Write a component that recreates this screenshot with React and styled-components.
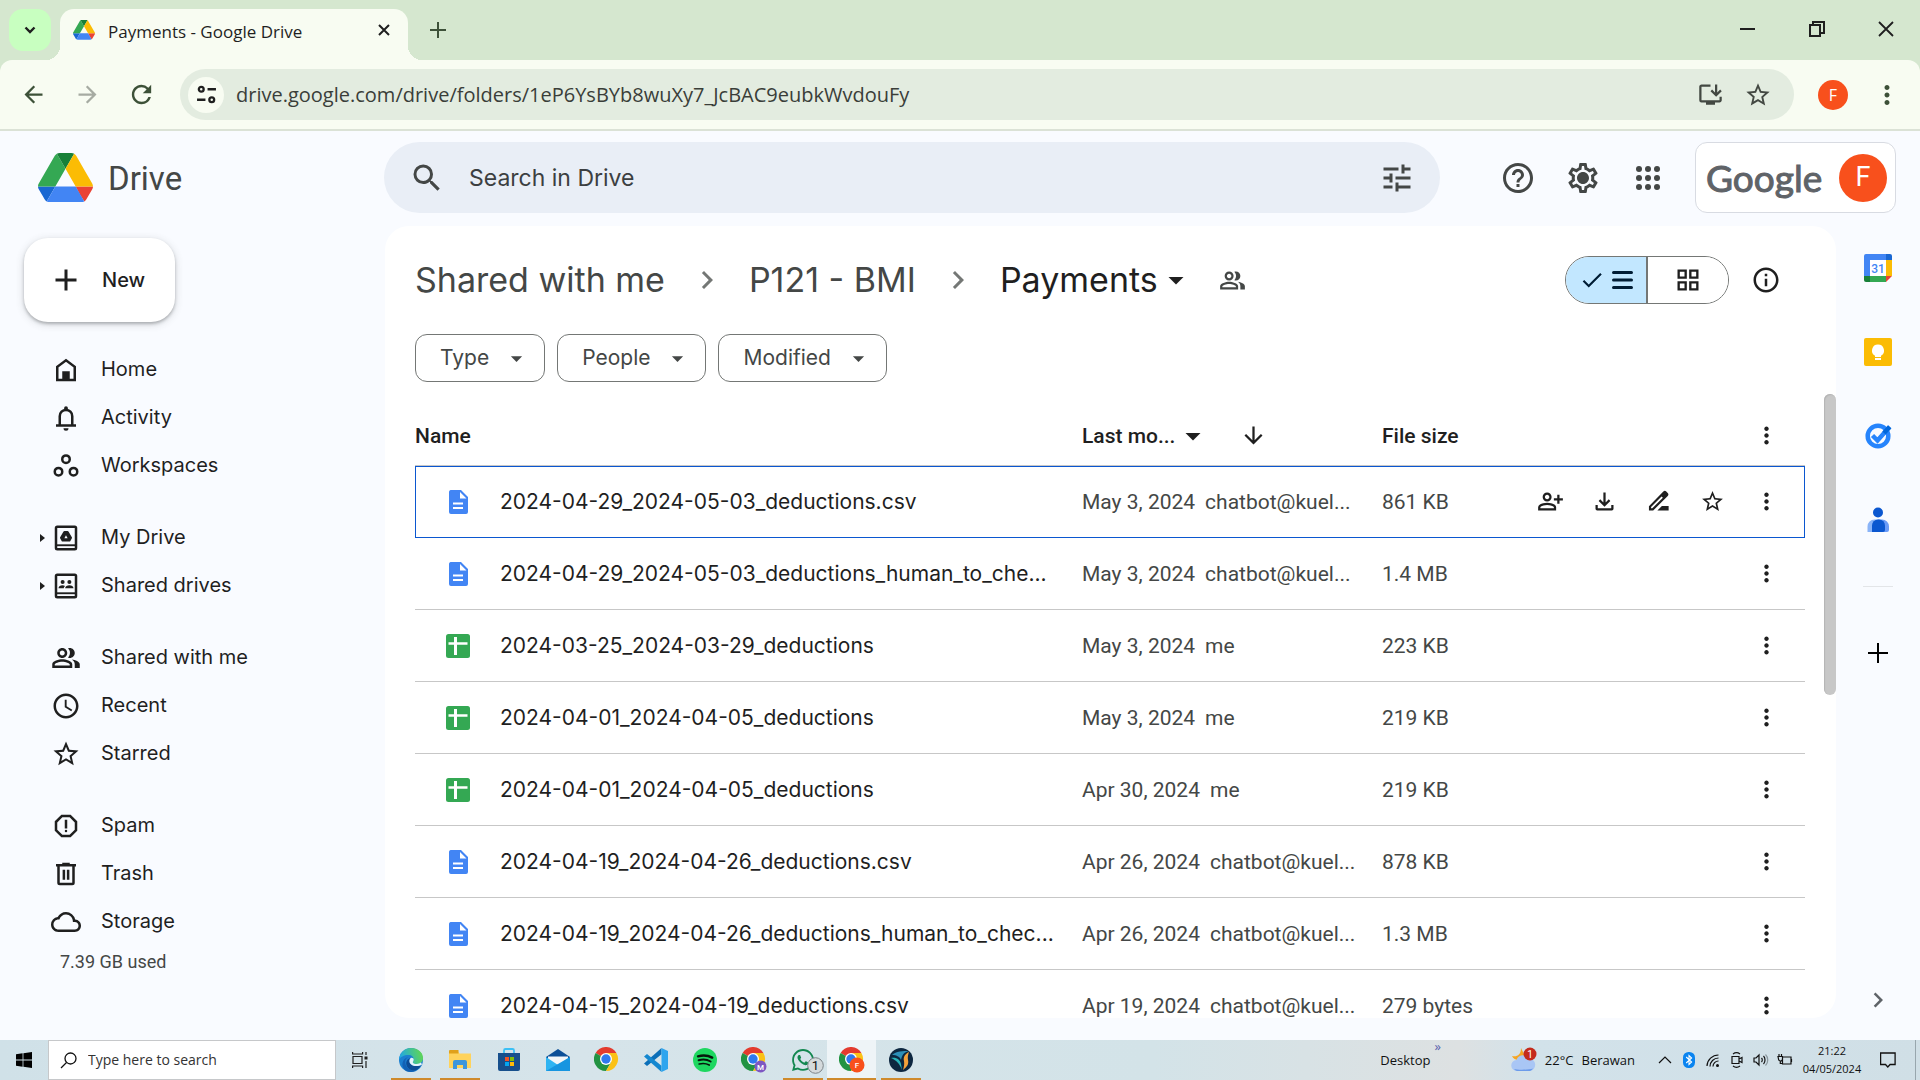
import React from "react";
import styled, { createGlobalStyle } from "styled-components";
import {
  MdSearch, MdTune, MdHelpOutline, MdOutlineSettings, MdStarBorder, MdOutlineInstallDesktop,
  MdMoreVert, MdOutlinePeopleAlt, MdAccessTime, MdOutlineReport, MdCloudQueue, MdOutlineInfo,
  MdOutlineGridView, MdCheck, MdChevronRight, MdArrowDropDown, MdArrowBack, MdArrowForward, MdRefresh,
  MdAdd, MdArrowDownward, MdOutlinePersonAddAlt,
} from "react-icons/md";
import { FaWhatsapp } from "react-icons/fa";

const GlobalStyle = createGlobalStyle`
  *, *::before, *::after { box-sizing: border-box; }
  body { margin: 0; font-family: Roboto, "Liberation Sans", sans-serif; color: #1f1f1f; }
  button, input { font: inherit; color: inherit; background: none; border: 0; padding: 0; margin: 0; }
  button { cursor: pointer; }
  input:focus { outline: none; }
  a { color: inherit; text-decoration: none; }
  svg { display: block; flex: none; }
`;

const uiFont = `"Open Sans", "Noto Sans", sans-serif`;
const brandFont = `Inter, Roboto, sans-serif`;

const Screen = styled.div`
  display: flex;
  flex-direction: column;
  height: 100vh;
  overflow: hidden;
  background: #f9fbff;
`;

const IconButton = styled.button`
  display: flex;
  align-items: center;
  justify-content: center;
  flex: none;
  width: ${(p) => p.$w || 48}px;
  height: ${(p) => p.$h || p.$w || 48}px;
  border-radius: ${(p) => (p.$square ? 0 : 24)}px;
  color: ${(p) => p.$color || "#1f1f1f"};
`;

const Avatar = styled.span`
  display: grid;
  place-items: center;
  width: ${(p) => p.$size}px;
  height: ${(p) => p.$size}px;
  border-radius: 50%;
  background: #f8501c;
  color: #fff;
  font-size: ${(p) => p.$font}px;
  line-height: 1;
`;

/* ---------- Browser chrome ---------- */

const Browser = styled.div`
  flex: none;
  background: #d5e7cf;
  font-family: ${uiFont};
`;

const TabStrip = styled.div`
  display: flex;
  align-items: flex-start;
  height: 60px;
  padding-left: 9px;
`;

const TabSearch = styled.button`
  display: grid;
  place-items: center;
  width: 42px;
  height: 42px;
  margin-top: 9px;
  border-radius: 14px;
  background: #c8ffc0;
`;

const Tab = styled.div`
  position: relative;
  display: flex;
  align-items: center;
  width: 348px;
  height: 51px;
  margin: 9px 9px 0;
  padding: 0 12px 9px 13px;
  border-radius: 14px 14px 0 0;
  background: #f8fcf2;
  font-size: 17px;
  line-height: 24px;

  &::before, &::after {
    content: "";
    position: absolute;
    bottom: 0;
    width: 14px;
    height: 14px;
  }
  &::before { right: 100%; background: radial-gradient(circle at 0 0, transparent 14px, #f8fcf2 14px); }
  &::after { left: 100%; background: radial-gradient(circle at 100% 0, transparent 14px, #f8fcf2 14px); }
`;

const TabTitle = styled.span`
  flex: 1;
  padding: 3px 0 0 13px;
  white-space: nowrap;
`;

const NewTab = styled(IconButton)`
  margin-top: 9px;
`;

const WindowControls = styled.div`
  display: flex;
  margin-left: auto;
`;

const Toolbar = styled.div`
  display: flex;
  align-items: center;
  height: 71px;
  padding: 0 6px;
  border-radius: 12px 12px 0 0;
  border-bottom: 2px solid #dbe2d6;
  background: #f8fcf2;
`;

const Omnibox = styled.div`
  display: flex;
  align-items: center;
  flex: 1;
  height: 51px;
  margin: 0 12px;
  padding: 0 12px 0 8px;
  border-radius: 26px;
  background: #e3ece0;
`;

const SiteInfo = styled.button`
  display: grid;
  place-items: center;
  width: 36px;
  height: 36px;
  border-radius: 50%;
  background: #f8fcf2;
`;

const UrlInput = styled.input`
  flex: 1;
  min-width: 0;
  margin-left: 12px;
  font-size: 20px;
  line-height: 28px;
  color: #3a3e39;
`;

/* ---------- Drive header ---------- */

const DriveHeader = styled.header`
  display: flex;
  align-items: center;
  flex: none;
  height: 95px;
  padding: 0 24px 2px 0;
`;

const Brand = styled.a`
  display: flex;
  align-items: center;
  gap: 15px;
  flex: none;
  width: 384px;
  padding-left: 38px;
  font-size: 33px;
  line-height: 40px;
  color: #444746;
`;

const BrandName = styled.span`
  padding-top: 4px;
`;

const SearchBar = styled.form`
  display: flex;
  align-items: center;
  flex: 1;
  height: 71px;
  margin-right: 48px;
  padding: 0 13px;
  border-radius: 36px;
  background: #e9eef6;
`;

const SearchInput = styled.input`
  flex: 1;
  min-width: 0;
  margin-left: 12px;
  font-family: ${brandFont};
  font-size: 23px;
  line-height: 36px;
  &::placeholder { color: #3c3f41; opacity: 1; }
`;

const HeaderActions = styled.div`
  display: flex;
  gap: 5px;
  margin-right: 17px;
`;

const AccountCard = styled.button`
  display: flex;
  align-items: center;
  justify-content: space-between;
  width: 201px;
  height: 71px;
  padding: 0 8px 0 10px;
  border: 1px solid #d8dbe2;
  border-radius: 12px;
  background: #fff;
`;

const Wordmark = styled.span`
  font-family: Lato, Roboto, sans-serif;
  font-size: 37px;
  line-height: 44px;
  -webkit-text-stroke: 1px #5f6368;
  color: #5f6368;
`;

/* ---------- Body ---------- */

const Body = styled.div`
  display: grid;
  grid-template-columns: 385px minmax(0, 1fr) 84px;
  flex: 1;
  min-height: 0;
`;

const Sidebar = styled.nav`
  padding-top: 12px;
`;

const NewButton = styled.button`
  display: flex;
  align-items: center;
  gap: 18px;
  height: 84px;
  margin: 0 0 24px 24px;
  padding: 0 30px 0 24px;
  border-radius: 24px;
  background: #fff;
  box-shadow: 0 2px 3px rgba(60, 64, 67, 0.3), 0 2px 8px rgba(60, 64, 67, 0.2);
  font-family: ${brandFont};
  font-size: 20px;
  font-weight: 500;
  line-height: 28px;
`;

const NavGroup = styled.ul`
  list-style: none;
  margin: 0 0 24px;
  padding: 0;
  &:last-of-type { margin-bottom: 4px; }
`;

const NavLink = styled.a`
  display: flex;
  align-items: center;
  height: 48px;
  padding-left: 33px;
  font-family: ${brandFont};
  font-size: 20px;
  line-height: 28px;
`;

const Expander = styled.span`
  display: grid;
  place-items: center;
  width: 18px;
`;

const NavLabel = styled.span`
  padding: 0 0 2px 20px;
`;

const Quota = styled.div`
  padding-left: 60px;
  font-size: 18px;
  line-height: 24px;
  color: #444746;
`;

const Panel = styled.main`
  display: flex;
  flex-direction: column;
  min-height: 0;
  margin-bottom: 22px;
  padding: 30px 0 0 30px;
  border-radius: 24px;
  background: #fff;
  overflow: hidden;
`;

const PanelHead = styled.div`
  display: flex;
  align-items: center;
  flex: none;
  height: 48px;
  padding-right: 46px;
`;

const Crumbs = styled.ol`
  display: flex;
  align-items: center;
  flex: 1;
  list-style: none;
  margin: 0;
  padding: 0;
  font-family: ${brandFont};
  font-size: 34px;
  line-height: 44px;
  color: #444746;
`;

const Crumb = styled.li`
  display: flex;
  align-items: center;
  white-space: nowrap;
`;

const CrumbSeparator = styled.span`
  display: grid;
  place-items: center;
  width: 84px;
  color: #747775;
`;

const CrumbButton = styled.button`
  display: flex;
  align-items: center;
  color: #1f1f1f;
`;

const ViewToggle = styled.div`
  display: flex;
  width: 164px;
  height: 48px;
  margin-right: 13px;
  border: 1px solid #747775;
  border-radius: 24px;
  overflow: hidden;
`;

const ToggleHalf = styled.button`
  display: flex;
  align-items: center;
  justify-content: center;
  gap: 7px;
  flex: 1;
  background: ${(p) => (p.$on ? "#c2e7ff" : "#fff")};
  color: ${(p) => (p.$on ? "#001d35" : "#1f1f1f")};
  & + & { border-left: 2px solid #747775; }
`;

const Chips = styled.div`
  display: flex;
  gap: 12px;
  flex: none;
  margin: 30px 0 12px;
`;

const Chip = styled.button`
  display: flex;
  align-items: center;
  gap: 14px;
  height: 48px;
  padding: 0 14px 0 24px;
  border: 1px solid #747775;
  border-radius: 12px;
  font-family: ${brandFont};
  font-size: 21px;
  line-height: 28px;
  color: #444746;
`;

const Scroller = styled.div`
  display: flex;
  flex: 1;
  min-height: 0;
  overflow: hidden;
`;

const ScrollThumb = styled.div`
  flex: none;
  width: 12px;
  height: 301px;
  margin-left: 19px;
  border-radius: 6px;
  background: #c7c7c7;
  box-shadow: inset 1px 1px 1px #b4b4b4;
`;

const Table = styled.table`
  flex: 1;
  align-self: flex-start;
  margin-top: 12px;
  table-layout: fixed;
  border-spacing: 0;
  font-size: 21px;
  line-height: 28px;
  color: #444746;
`;

const HeadCell = styled.th`
  width: ${(p) => (p.$w ? p.$w + "px" : "auto")};
  height: 60px;
  padding: 0;
  border-bottom: 1px solid #c7c7c7;
  text-align: left;
  font-weight: 500;
  color: #1f1f1f;
`;

const HeadInner = styled.div`
  display: flex;
  align-items: center;
`;

const SortButton = styled(IconButton)`
  margin-left: 18px;
`;

const Row = styled.tr`
  outline: ${(p) => (p.$focused ? "1px solid #0b57d0" : "none")};
  outline-offset: -1px;
`;

const Cell = styled.td`
  height: 72px;
  padding: 0;
  border-bottom: 1px solid #c7c7c7;
  white-space: nowrap;
  overflow: hidden;
`;

const NameInner = styled.div`
  display: flex;
  align-items: center;
  gap: 30px;
  padding-left: 31px;
  font-family: ${brandFont};
  color: #1f1f1f;
`;

const Modifier = styled.span`
  margin-left: 10px;
`;

const RowActions = styled.div`
  display: flex;
  justify-content: flex-end;
  padding-right: 12px;
`;

const Rail = styled.aside`
  display: flex;
  flex-direction: column;
  align-items: center;
`;

const RailRule = styled.hr`
  width: 30px;
  height: 1px;
  margin: 24px 0;
  border: 0;
  background: #e3e5e8;
`;

const RailCollapse = styled(IconButton)`
  margin: auto 0 16px;
`;

/* ---------- Taskbar ---------- */

const Taskbar = styled.footer`
  display: flex;
  align-items: stretch;
  flex: none;
  height: 40px;
  background: linear-gradient(90deg, #d0e1e8 0%, #d6e4ea 30%, #d3e3e8 60%, #dde1e2 76%, #d2e2ea 80%, #d0dfe6 100%);
  font-family: ${uiFont};
  font-size: 13px;
  line-height: 18px;
  color: #111;
`;

const TaskSearch = styled.label`
  display: flex;
  align-items: center;
  gap: 11px;
  width: 288px;
  padding-left: 11px;
  border: 1px solid #c6c8ca;
  background: #fff;
`;

const TaskInput = styled.input`
  flex: 1;
  min-width: 0;
  font-size: 14px;
  &::placeholder { color: #333; opacity: 1; }
`;

const TaskApps = styled.div`
  display: flex;
  margin-left: 2px;
`;

const TaskApp = styled.button`
  display: grid;
  place-items: center;
  width: 49px;
  height: 40px;
  background-color: ${(p) => (p.$active ? "#eef4f7" : "transparent")};
  background-image: ${(p) => (p.$open || p.$active ? "linear-gradient(#cf8a2b, #cf8a2b)" : "none")};
  background-size: ${(p) => (p.$active ? "100%" : "40px")} 2px;
  background-position: bottom center;
  background-repeat: no-repeat;
`;

const Tray = styled.div`
  display: flex;
  align-items: center;
  margin-left: auto;
`;

const DesktopBar = styled.button`
  display: flex;
  align-items: center;
  gap: 4px;
  height: 40px;
  margin-right: 70px;
`;

const Overflow = styled.span`
  align-self: flex-start;
  line-height: 12px;
  color: #5a5fae;
`;

const Weather = styled.button`
  display: flex;
  align-items: center;
  gap: 8px;
  margin-right: 18px;
`;

const Clock = styled.button`
  width: 64px;
  margin-left: 3px;
  font-size: 11px;
  line-height: 18px;
  text-align: center;
`;

const ShowDesktop = styled.button`
  align-self: stretch;
  width: 5px;
  margin-left: 3px;
  border-left: 1px solid #98a6ad;
`;

/* ---------- Drawings ---------- */

const DriveLogo = ({ w }) => (
  <svg width={w} viewBox="0 0 87.3 78" aria-hidden="true">
    <path d="m6.6 66.85 3.85 6.65c.8 1.4 1.95 2.5 3.3 3.3l13.75-23.8h-27.5c0 1.55.4 3.1 1.2 4.5z" fill="#1967d2" />
    <path d="m43.65 25-13.75-23.8c-1.35.8-2.5 1.9-3.3 3.3l-25.4 44a9.06 9.06 0 0 0 -1.2 4.5h27.5z" fill="#34a853" />
    <path d="m73.55 76.8c1.35-.8 2.5-1.9 3.3-3.3l1.6-2.75 7.65-13.25c.8-1.4 1.2-2.95 1.2-4.5h-27.502l5.852 11.5z" fill="#ea4335" />
    <path d="m43.65 25 13.75-23.8c-1.35-.8-2.9-1.2-4.5-1.2h-18.5c-1.6 0-3.15.45-4.5 1.2z" fill="#188038" />
    <path d="m59.8 53h-32.3l-13.75 23.8c1.35.8 2.9 1.2 4.5 1.2h50.8c1.6 0 3.15-.45 4.5-1.2z" fill="#4285f4" />
    <path d="m73.4 26.5-12.7-22c-.8-1.4-1.95-2.5-3.3-3.3l-13.75 23.8 16.15 28h27.45c0-1.55-.4-3.1-1.2-4.5z" fill="#fbbc04" />
  </svg>
);

const Line = ({ size = 30, sw = 2, box = 24, children }) => (
  <svg width={size} height={size} viewBox={`0 0 ${box} ${box}`} fill="none" stroke="currentColor" strokeWidth={sw} aria-hidden="true">{children}</svg>
);

const HomeIcon = () => <Line><path d="M5 20V9.5L12 4.2l7 5.3V20z" /><path d="M9 13h6v7H9z" fill="currentColor" stroke="none" /></Line>;
const BellIcon = () => (
  <Line>
    <path d="M7 18v-7.5a5 5 0 0 1 10 0V18M4 18h16" />
    <path d="M10.500 5.500V4a1.500 1.500 0 0 1 3 0v1.500zM10 20.200h4a2 2 0 0 1-4 0z" fill="currentColor" stroke="none" />
  </Line>
);
const SpacesIcon = () => <Line><circle cx="12" cy="6.500" r="3" /><circle cx="6" cy="16.500" r="3" /><circle cx="18" cy="16.500" r="3" /></Line>;
const MyDriveIcon = () => (
  <Line>
    <rect x="4" y="3" width="16" height="18" rx="1" /><path d="M4 17.800h16" strokeWidth="1.500" />
    <path d="M10.700 7.200h2.600l2.700 4.600-1.200 2.200H9.200L8 11.800z" fill="currentColor" strokeWidth="1.600" strokeLinejoin="round" />
    <path d="M12 9.800 10.700 12.200h2.600z" fill="#f9fbff" stroke="none" />
  </Line>
);
const SharedDrivesIcon = () => (
  <Line>
    <rect x="4" y="3" width="16" height="18" rx="1" /><path d="M4 17.800h16" strokeWidth="1.500" />
    <g fill="currentColor" stroke="none">
      <circle cx="9.300" cy="8.700" r="1.600" /><circle cx="14.700" cy="8.700" r="1.600" />
      <path d="M6 13.800c0-1.700 1.500-2.400 3.200-2.400.8 0 1.500.2 2 .500-.7.6-1 1.200-1 1.900zM11.300 13.800c0-1.700 1.700-2.400 3.400-2.400 1.700 0 3.300.7 3.300 2.400z" />
    </g>
  </Line>
);
const TrashIcon = () => <Line><path d="M6 5.500V19a1 1 0 0 0 1 1h10a1 1 0 0 0 1-1V5.500M4 5h16M9 4h6M10.300 8.500v8M13.700 8.500v8" /></Line>;
const ListIcon = () => <svg width="21" height="18" viewBox="0 0 21 18" stroke="currentColor" strokeWidth="3" strokeLinecap="round" aria-hidden="true"><path d="M1.500 1.500h18M1.500 9h18M1.500 16.500h18" /></svg>;
const DownloadIcon = () => <Line size={27}><path d="M12 4v11M7.500 10.800 12 15.300l4.500-4.500M5 15v3.500a.500.500 0 0 0 .500.500h13a.500.500 0 0 0 .500-.500V15" /></Line>;
const RenameIcon = () => (
  <svg width="27" height="27" viewBox="0 0 24 24" fill="currentColor" aria-hidden="true">
    <path d="m15 16-4 4h10v-4zM16.300 3.200 3.500 16.200V20h3.800L20.200 7a1.800 1.800 0 0 0 0-2.500l-1.300-1.300a1.800 1.800 0 0 0-2.600 0zM6.500 18H5.400v-1.100l9.300-9.300 1.200 1.100z" />
  </svg>
);
const GearIcon = () => <svg width="36" height="36" viewBox="0 0 24 24" aria-hidden="true"><MdOutlineSettings size={24} /><circle cx="12" cy="12" r="3.400" fill="currentColor" /></svg>;
const AppsIcon = () => (
  <svg width="36" height="36" viewBox="0 0 24 24" fill="currentColor" aria-hidden="true">
    {[6, 12, 18].map((y) => [6, 12, 18].map((x) => <circle key={`${x}-${y}`} cx={x} cy={y} r="2" />))}
  </svg>
);
const TuneSite = () => <Line size={21} box={20} sw={2.2}><circle cx="5" cy="5" r="2.300" /><path d="M11 5h8M1 15h8" /><circle cx="15" cy="15" r="2.300" /></Line>;

const DocIcon = () => (
  <svg width="24" height="24" viewBox="0 0 24 24" aria-hidden="true">
    <path d="M4.500 0H15l7 7v15a2 2 0 0 1-2 2H5a2 2 0 0 1-2-2V2a2 2 0 0 1 1.500-2z" fill="#4285f4" />
    <path d="M14 2v6.500h6.500zM7 12.500h10v2H7zM7 17h10v2H7z" fill="#fff" />
  </svg>
);
const SheetIcon = () => (
  <svg width="24" height="24" viewBox="0 0 24 24" aria-hidden="true">
    <rect width="24" height="24" rx="2.500" fill="#34a853" />
    <path d="M8 3h3v5.200h10.500v2.600H11V21H8V10.800H2.500V8.200H8z" fill="#fff" />
  </svg>
);

const CalendarIcon = () => (
  <svg width="28" height="28" viewBox="0 0 28 28" aria-hidden="true">
    <path d="M2 0h20v6H6v16H0V2a2 2 0 0 1 2-2z" fill="#4285f4" />
    <path d="M22 0h4a2 2 0 0 1 2 2v4h-6z" fill="#1967d2" /><path d="M22 6h6v16h-6z" fill="#fbbc04" />
    <path d="M6 22h16v6H6z" fill="#34a853" /><path d="M0 22h6v6H2a2 2 0 0 1-2-2z" fill="#188038" />
    <path d="M22 28v-6h6z" fill="#ea4335" /><path d="M6 6h16v16H6z" fill="#fff" />
    <text x="14" y="18.500" textAnchor="middle" fontFamily="Roboto, sans-serif" fontSize="12" fontWeight="500" fill="#4285f4">31</text>
  </svg>
);
const KeepIcon = () => (
  <svg width="28" height="28" viewBox="0 0 28 28" aria-hidden="true">
    <rect width="28" height="28" rx="2" fill="#fbbc04" />
    <path d="M14 6.500a6 6 0 0 0-3 11.200V19h6v-1.300a6 6 0 0 0-3-11.200zM11 20h6v2h-6z" fill="#fff" />
  </svg>
);
const TasksIcon = () => (
  <svg width="28" height="28" viewBox="0 0 28 28" fill="none" aria-hidden="true">
    <circle cx="14" cy="14" r="10.300" stroke="#2684fc" strokeWidth="4.500" />
    <path d="m8.500 13.500 5 5L25.500 5" stroke="#2684fc" strokeWidth="4.500" /><path d="m20 11 5.800-6.200" stroke="#0066da" strokeWidth="4.500" />
  </svg>
);
const ContactsIcon = () => (
  <svg width="28" height="28" viewBox="0 0 28 28" aria-hidden="true">
    <circle cx="14" cy="6.500" r="5" fill="#0b57d0" />
    <path d="M3.500 26v-5.500a7 7 0 0 1 7-7H14V26z" fill="#8ab4f8" /><path d="M14 13.500h4a7 7 0 0 1 7 7V24a2 2 0 0 1-2 2h-9z" fill="#6a9bf8" />
    <path d="M8 26v-6.500a6 6 0 0 1 6-6h1a6 6 0 0 1 6 6V24a2 2 0 0 1-2 2z" fill="#0b57d0" />
  </svg>
);

const WindowsIcon = () => <svg width="16" height="16" viewBox="0 0 16 16" fill="#000" aria-hidden="true"><path d="M0 2.200 6.600 1.300v6.300H0zM7.400 1.200 16 0v7.600H7.400zM0 8.400h6.600v6.300L0 13.800zM7.400 8.400H16V16l-8.600-1.200z" /></svg>;
const EdgeIcon = () => (
  <svg width="24" height="24" viewBox="0 0 24 24" aria-hidden="true">
    <defs>
      <linearGradient id="edgeTop" x1="0" y1="0.500" x2="1" y2="0.300"><stop offset="0" stopColor="#1ea7e8" /><stop offset="1" stopColor="#62d84e" /></linearGradient>
    </defs>
    <circle cx="12" cy="12" r="12" fill="#1b7fd0" />
    <path d="M0 12C.500 4.500 6 0 12 0c7 0 12 4.500 12 10 0 4-3 6-6.200 6-2.300 0-4-.8-4-1.800 0-.8.9-1.200.9-2.900 0-2.200-2-4.300-5.200-4.300C5 7 1 9 0 12z" fill="url(#edgeTop)" />
    <path d="M9 9.300c-3 1.500-3.500 5.500-1.500 9 2 3.200 6 5 10 3.800C16 23.300 14 24 12 24 6 24 2 19 3.800 14 4.800 11.200 6.800 9.700 9 9.300z" fill="#1261b5" />
    <path d="M22 16.800c-1 .6-2.600 1.200-4.600 1.200-4.400 0-7-2.600-7-5 0-1.400.7-2.300 1.400-2.800-2.800.2-5 2.700-4.500 6 .6 3.700 4 6.300 8 6.300 3 0 5.500-2.500 6.700-5.700z" fill="#0c4c96" />
    <path d="M14.700 11.500c0 1.600-.9 2-.9 2.700 0 1 1.700 1.800 4 1.800 1.600 0 3-.500 4.200-1.400l1 2c-1.500 1-3.500 1.500-5.600 1.500-4.400 0-7-2.600-7-5.200 0-1.500.8-2.500 1.800-3.200 1.500-.1 2.500.7 2.500 1.800z" fill="#e4f3fb" />
  </svg>
);
const FolderIcon = () => (
  <svg width="22" height="20" viewBox="0 0 22 20" aria-hidden="true">
    <path d="M0 1.500h9l1.500 2H22V18H0z" fill="#ffd35c" /><path d="M.5 0h9v3.500H0V.5z" fill="#e0a11b" />
    <path d="M4 19v-7a2 2 0 0 1 2-2h10a2 2 0 0 1 2 2v7h-4v-4H8v4z" fill="#3d96dc" />
  </svg>
);
const StoreIcon = () => (
  <svg width="24" height="24" viewBox="0 0 24 24" aria-hidden="true">
    <path d="M7 6V2.500A1.500 1.500 0 0 1 8.500 1h7A1.500 1.500 0 0 1 17 2.500V6" stroke="#3cc0f5" strokeWidth="1.800" fill="none" />
    <path d="M1 5h22v16a2 2 0 0 1-2 2H3a2 2 0 0 1-2-2z" fill="#174f8c" />
    <path d="M8 9h4v4H8z" fill="#f35325" /><path d="M13 9h4v4h-4z" fill="#81bc06" /><path d="M8 14h4v4H8z" fill="#05a6f0" /><path d="M13 14h4v4h-4z" fill="#ffba08" />
  </svg>
);
const MailIcon = () => (
  <svg width="24" height="24" viewBox="0 0 24 24" aria-hidden="true">
    <path d="M0 9 12 1l12 8v4H0z" fill="#0d4f97" /><path d="M2 8.500h20V16H2z" fill="#f3f6f8" />
    <path d="M0 9l12 8 12-8v14H0z" fill="#2fb4f2" /><path d="M0 23 24 9v14z" fill="#1795e0" />
  </svg>
);
const ChromeIcon = ({ badge, badgeColor, r = 6 }) => (
  <svg width="26" height="26" viewBox="0 0 26 26" aria-hidden="true">
    <path d="M12 12 1.600 6A12 12 0 0 1 22.400 6z" fill="#e33b2e" /><path d="M1.600 6a12 12 0 0 0 10.400 18l5.200-9-5.200-3z" fill="#229342" />
    <path d="M22.400 6A12 12 0 0 1 12 24l5.200-9L12 6z" fill="#fbc116" />
    <circle cx="12" cy="12" r="6" fill="#fff" /><circle cx="12" cy="12" r="4.700" fill="#2f79ee" />
    {badge && <circle cx={25.500 - r} cy={25.500 - r} r={r} fill={badgeColor} />}
    {badge && <text x={25.500 - r} y={28.500 - r} textAnchor="middle" fontFamily="Roboto, sans-serif" fontSize="8" fontWeight="500" fill="#fff">{badge}</text>}
  </svg>
);
const CodeIcon = () => (
  <svg width="24" height="24" viewBox="0 0 24 24" aria-hidden="true">
    <path d="M17.500 0v6.200L3 18l-3-2.500z" fill="#0b6fb8" /><path d="M17.500 24v-6.200L3 6 0 8.500z" fill="#1488d0" />
    <path d="M17.500 0 24 3v18l-6.500 3z" fill="#2ea5ee" />
  </svg>
);
const SpotifyIcon = () => (
  <svg width="24" height="24" viewBox="0 0 24 24" fill="none" stroke="#06170c" strokeLinecap="round" aria-hidden="true">
    <circle cx="12" cy="12" r="12" fill="#1ed760" stroke="none" />
    <path d="M5 8.300c5-1.400 10-1 14.200 1.300" strokeWidth="2.400" /><path d="M5.600 12.300c4.300-1.200 8.500-.8 12 1.200" strokeWidth="2" /><path d="M6.200 16c3.500-.9 7-.600 10 1" strokeWidth="1.700" />
  </svg>
);
const WhatsAppIcon = () => (
  <svg width="44" height="28" viewBox="0 0 44 28" aria-hidden="true">
    <g color="#12874f" transform="translate(9.500 1.500)"><FaWhatsapp size={25} /></g>
    <circle cx="34.500" cy="19.500" r="7.800" fill="#d5dadc" stroke="#7d8488" />
    <text x="34.500" y="24" textAnchor="middle" fontFamily="Roboto, sans-serif" fontSize="13" fill="#111">1</text>
  </svg>
);
const WingIcon = () => (
  <svg width="24" height="24" viewBox="0 0 24 24" aria-hidden="true">
    <circle cx="12" cy="12" r="12" fill="#0d2740" />
    <path d="M3 7c4-4 11-4 17-4-5 1-7 4-8 9-1-3-4-5-9-5z" fill="#2c8fb8" /><path d="M2 10c6-1 9 2 10 6l1 6C11 16 7 12 2 10z" fill="#28b3b9" />
    <path d="M20 4c-4 2-6 5-5 9 .500 3 0 6-1 9 4-3 6-6 5-10-.5-3 0-5 1-8z" fill="#f4a13a" />
  </svg>
);
const WeatherIcon = () => (
  <svg width="26" height="26" viewBox="0 0 26 26" aria-hidden="true">
    <path d="M10 1c0 7-4 9-9 8 2 5 10 6 13 0z" fill="#f6a623" />
    <path d="M6 24a5.500 5.500 0 0 1-.5-11 7 7 0 0 1 12.500-1.500A6.300 6.300 0 0 1 19 24z" fill="#a9c6f5" /><path d="M3 22c4 1 14 1 19-.5A6 6 0 0 1 19 24H6a5 5 0 0 1-3-2z" fill="#6c9bea" />
    <circle cx="19" cy="7" r="6.500" fill="#c42b1c" />
    <text x="19" y="11" textAnchor="middle" fontFamily="Roboto, sans-serif" fontSize="10" fill="#fff">1</text>
  </svg>
);

const Tiny = ({ children, w = 16 }) => <svg width={w} height="16" viewBox={`0 0 ${w} 16`} fill="none" stroke="#111" strokeWidth="1.200" aria-hidden="true">{children}</svg>;

/* ---------- Data ---------- */

const navGroups = [
  [[HomeIcon, "Home"], [BellIcon, "Activity"], [SpacesIcon, "Workspaces"]],
  [[MyDriveIcon, "My Drive", true], [SharedDrivesIcon, "Shared drives", true]],
  [[MdOutlinePeopleAlt, "Shared with me"], [MdAccessTime, "Recent"], [MdStarBorder, "Starred"]],
  [[MdOutlineReport, "Spam"], [TrashIcon, "Trash"], [MdCloudQueue, "Storage"]],
];

const files = [
  ["doc", "2024-04-29_2024-05-03_deductions.csv", "May 3, 2024", "chatbot@kuel...", "861 KB"],
  ["doc", "2024-04-29_2024-05-03_deductions_human_to_che...", "May 3, 2024", "chatbot@kuel...", "1.4 MB"],
  ["sheet", "2024-03-25_2024-03-29_deductions", "May 3, 2024", "me", "223 KB"],
  ["sheet", "2024-04-01_2024-04-05_deductions", "May 3, 2024", "me", "219 KB"],
  ["sheet", "2024-04-01_2024-04-05_deductions", "Apr 30, 2024", "me", "219 KB"],
  ["doc", "2024-04-19_2024-04-26_deductions.csv", "Apr 26, 2024", "chatbot@kuel...", "878 KB"],
  ["doc", "2024-04-19_2024-04-26_deductions_human_to_chec...", "Apr 26, 2024", "chatbot@kuel...", "1.3 MB"],
  ["doc", "2024-04-15_2024-04-19_deductions.csv", "Apr 19, 2024", "chatbot@kuel...", "279 bytes"],
];

const quickActions = [
  ["Share", <MdOutlinePersonAddAlt size={27} />],
  ["Download", <DownloadIcon />],
  ["Rename", <RenameIcon />],
  ["Add to starred", <MdStarBorder size={25} />],
];

const taskApps = [
  ["Microsoft Edge", <EdgeIcon />, "open"],
  ["File Explorer", <FolderIcon />, "open"],
  ["Microsoft Store", <StoreIcon />],
  ["Mail", <MailIcon />],
  ["Google Chrome", <ChromeIcon />],
  ["Visual Studio Code", <CodeIcon />],
  ["Spotify", <SpotifyIcon />],
  ["Chrome, profile M", <ChromeIcon badge="M" badgeColor="#7e57c2" />],
  ["WhatsApp", <WhatsAppIcon />, "open"],
  ["Chrome, profile F", <ChromeIcon badge="F" badgeColor="#f8501c" r={7.5} />, "active"],
  ["Wing", <WingIcon />, "open"],
];

/* ---------- Sections ---------- */

function BrowserChrome() {
  return (
    <Browser>
      <TabStrip>
        <TabSearch aria-label="Search tabs"><Line size={16} box={16} sw={2.4}><path d="M3.500 5.500 8 10l4.500-4.500" /></Line></TabSearch>
        <Tab>
          <DriveLogo w={22} />
          <TabTitle>Payments - Google Drive</TabTitle>
          <IconButton $w={24} aria-label="Close tab"><Line size={14} box={14} sw={2}><path d="m2 2 10 10M12 2 2 12" /></Line></IconButton>
        </Tab>
        <NewTab $w={42} aria-label="New tab" $color="#3d5138"><Line size={16} box={16} sw={2}><path d="M8 0v16M0 8h16" /></Line></NewTab>
        <WindowControls>
          <IconButton $w={69} $h={58} $square aria-label="Minimize"><Line size={16} box={16}><path d="M0 8h15" /></Line></IconButton>
          <IconButton $w={69} $h={58} $square aria-label="Restore"><Line size={16} box={16}><path d="M1 4h10v11H1zM4 4V1h11v11h-4" /></Line></IconButton>
          <IconButton $w={69} $h={58} $square aria-label="Close"><Line size={16} box={16} sw={1.8}><path d="m1 1 14 14M15 1 1 15" /></Line></IconButton>
        </WindowControls>
      </TabStrip>
      <Toolbar>
        <IconButton $w={54} aria-label="Back" $color="#3d5138"><MdArrowBack size={27} /></IconButton>
        <IconButton $w={54} aria-label="Forward" $color="#a6aba2"><MdArrowForward size={27} /></IconButton>
        <IconButton $w={54} aria-label="Reload" $color="#3d5138"><MdRefresh size={29} /></IconButton>
        <Omnibox>
          <SiteInfo aria-label="View site information"><TuneSite /></SiteInfo>
          <UrlInput aria-label="Address" defaultValue="drive.google.com/drive/folders/1eP6YsBYb8wuXy7_JcBAC9eubkWvdouFy" />
          <IconButton aria-label="Install Google Drive" $color="#434842"><MdOutlineInstallDesktop size={27} /></IconButton>
          <IconButton aria-label="Bookmark this tab" $color="#434842"><MdStarBorder size={28} /></IconButton>
        </Omnibox>
        <IconButton $w={54} aria-label="Profile"><Avatar $size={30} $font={16}>F</Avatar></IconButton>
        <IconButton $w={54} aria-label="Browser menu" $color="#3d5138"><MdMoreVert size={30} /></IconButton>
      </Toolbar>
    </Browser>
  );
}

function Header() {
  return (
    <DriveHeader>
      <Brand href="#drive"><DriveLogo w={55} /><BrandName>Drive</BrandName></Brand>
      <SearchBar role="search" onSubmit={(e) => e.preventDefault()}>
        <IconButton $w={60} type="submit" aria-label="Search" $color="#444746"><MdSearch size={36} /></IconButton>
        <SearchInput type="text" aria-label="Search in Drive" placeholder="Search in Drive" />
        <IconButton $w={60} type="button" aria-label="Advanced search" $color="#444746"><MdTune size={36} /></IconButton>
      </SearchBar>
      <HeaderActions>
        <IconButton $w={60} aria-label="Support" $color="#444746"><MdHelpOutline size={36} /></IconButton>
        <IconButton $w={60} aria-label="Settings" $color="#444746"><GearIcon /></IconButton>
        <IconButton $w={60} aria-label="Google apps" $color="#444746"><AppsIcon /></IconButton>
      </HeaderActions>
      <AccountCard aria-label="Google Account"><Wordmark>Google</Wordmark><Avatar $size={48} $font={27}>F</Avatar></AccountCard>
    </DriveHeader>
  );
}

function SideNav() {
  return (
    <Sidebar aria-label="Drive">
      <NewButton><MdAdd size={36} />New</NewButton>
      {navGroups.map((group, i) => (
        <NavGroup key={i}>
          {group.map(([Icon, label, expandable]) => (
            <li key={label}>
              <NavLink href="#nav">
                <Expander>{expandable && <svg width="5" height="8" viewBox="0 0 5 8" fill="currentColor" aria-hidden="true"><path d="M0 0l5 4-5 4z" /></svg>}</Expander>
                <Icon size={30} />
                <NavLabel>{label}</NavLabel>
              </NavLink>
            </li>
          ))}
        </NavGroup>
      ))}
      <Quota>7.39 GB used</Quota>
    </Sidebar>
  );
}

function FilePanel() {
  return (
    <Panel>
      <PanelHead>
        <Crumbs>
          <Crumb><a href="#shared">Shared with me</a></Crumb>
          <Crumb><CrumbSeparator><MdChevronRight size={36} /></CrumbSeparator><a href="#p121">P121 - BMI</a></Crumb>
          <Crumb>
            <CrumbSeparator><MdChevronRight size={36} /></CrumbSeparator>
            <CrumbButton>Payments<MdArrowDropDown size={36} /></CrumbButton>
            <IconButton $w={78} $h={48} aria-label="Manage access" $color="#444746"><MdOutlinePeopleAlt size={27} /></IconButton>
          </Crumb>
        </Crumbs>
        <ViewToggle>
          <ToggleHalf $on aria-label="List layout" aria-pressed="true"><MdCheck size={26} /><ListIcon /></ToggleHalf>
          <ToggleHalf aria-label="Grid layout" aria-pressed="false"><MdOutlineGridView size={28} /></ToggleHalf>
        </ViewToggle>
        <IconButton aria-label="View details"><MdOutlineInfo size={30} /></IconButton>
      </PanelHead>
      <Chips>
        {["Type", "People", "Modified"].map((c) => <Chip key={c}>{c}<MdArrowDropDown size={27} /></Chip>)}
      </Chips>
      <Scroller>
        <Table>
          <thead>
            <tr>
              <HeadCell>Name</HeadCell>
              <HeadCell $w={300}>
                <HeadInner>Last mo...<MdArrowDropDown size={36} /><SortButton aria-label="Reverse sort direction"><MdArrowDownward size={27} /></SortButton></HeadInner>
              </HeadCell>
              <HeadCell $w={141}>File size</HeadCell>
              <HeadCell $w={282}><RowActions><IconButton $w={54} aria-label="More sorting options"><MdMoreVert size={27} /></IconButton></RowActions></HeadCell>
            </tr>
          </thead>
          <tbody>
            {files.map(([kind, name, date, who, size], i) => (
              <Row key={i} $focused={i === 0}>
                <Cell><NameInner>{kind === "doc" ? <DocIcon /> : <SheetIcon />}{name}</NameInner></Cell>
                <Cell>{date}<Modifier>{who}</Modifier></Cell>
                <Cell>{size}</Cell>
                <Cell>
                  <RowActions>
                    {i === 0 && quickActions.map(([label, icon]) => <IconButton key={label} $w={54} aria-label={label}>{icon}</IconButton>)}
                    <IconButton $w={54} aria-label="More actions"><MdMoreVert size={27} /></IconButton>
                  </RowActions>
                </Cell>
              </Row>
            ))}
          </tbody>
        </Table>
        <ScrollThumb />
      </Scroller>
    </Panel>
  );
}

function SideRail() {
  return (
    <Rail>
      <IconButton $w={84} aria-label="Calendar"><CalendarIcon /></IconButton>
      <IconButton $w={84} aria-label="Keep"><KeepIcon /></IconButton>
      <IconButton $w={84} aria-label="Tasks"><TasksIcon /></IconButton>
      <IconButton $w={84} aria-label="Contacts"><ContactsIcon /></IconButton>
      <RailRule />
      <IconButton $w={84} aria-label="Get add-ons" $color="#000"><Line size={20} box={20}><path d="M10 0v20M0 10h20" /></Line></IconButton>
      <RailCollapse aria-label="Hide side panel" $color="#5f6368"><MdChevronRight size={30} /></RailCollapse>
    </Rail>
  );
}

function WindowsTaskbar() {
  return (
    <Taskbar>
      <IconButton $w={48} $h={40} $square aria-label="Start"><WindowsIcon /></IconButton>
      <TaskSearch>
        <Line size={17} box={17} sw={1.3}><circle cx="10.500" cy="6.500" r="5.500" /><path d="M6.500 10.500 1 16" /></Line>
        <TaskInput type="text" aria-label="Type here to search" placeholder="Type here to search" />
      </TaskSearch>
      <IconButton $w={48} $h={40} $square aria-label="Task view">
        <Line size={16} box={16} sw={1.2}><path d="M1 4.500h9v7H1zM.6 0v2h10V0M.6 16v-2h10v2M14 0v3M14 9v7" /><path d="M12.500 4.500h3v3h-3z" fill="currentColor" stroke="none" /></Line>
      </IconButton>
      <TaskApps>
        {taskApps.map(([name, icon, state]) => (
          <TaskApp key={name} aria-label={name} $open={state === "open"} $active={state === "active"}>{icon}</TaskApp>
        ))}
      </TaskApps>
      <Tray>
        <DesktopBar>Desktop<Overflow>»</Overflow></DesktopBar>
        <Weather><WeatherIcon /><span>22°C</span><span>Berawan</span></Weather>
        <IconButton $w={24} $h={40} $square aria-label="Show hidden icons"><Tiny><path d="m2 11 6-6 6 6" /></Tiny></IconButton>
        <IconButton $w={24} $h={40} $square aria-label="Bluetooth">
          <svg width="12" height="16" viewBox="0 0 12 16" aria-hidden="true"><rect width="12" height="16" rx="5.500" fill="#0a84f0" /><path d="m3.200 5 5.400 5L6 12.500v-9L8.600 6l-5.400 5" stroke="#fff" strokeWidth="1.100" fill="none" /></svg>
        </IconButton>
        <IconButton $w={24} $h={40} $square aria-label="Network">
          <Tiny><path d="M2 14A11.500 11.500 0 0 1 13.500 3M5 14.500A8.500 8.500 0 0 1 13.500 6M8 14.500a5.500 5.500 0 0 1 5.500-5.500" /><circle cx="12.500" cy="13.500" r="1.500" fill="#111" stroke="none" /></Tiny>
        </IconButton>
        <IconButton $w={24} $h={40} $square aria-label="Camera"><Tiny><path d="M3 4.500h7v7H3zM10 7l3-1.500v5L10 9M4 2c2-1.500 5-1.500 7 0M4 14c2 1.500 5 1.500 7 0" /></Tiny></IconButton>
        <IconButton $w={24} $h={40} $square aria-label="Volume"><Tiny><path d="M1 6h2l3-3v10l-3-3H1zM8.500 6c1 1 1 3 0 4M10.500 4c2 2 2 6 0 8" /><path d="M12.500 2.500c3 3 3 8 0 11" stroke="#8a979e" /></Tiny></IconButton>
        <IconButton $w={24} $h={40} $square aria-label="Battery"><Tiny><path d="M5.500 5H14v7H5.500zM14.500 7v3M2 2v2.500M4.500 2v2.500M1 4.500h4.500V7a2 2 0 0 1-4 0zM3.300 9v2.500h2" /></Tiny></IconButton>
        <Clock>21:22<br />04/05/2024</Clock>
        <IconButton $w={48} $h={40} $square aria-label="Notifications"><Tiny><path d="M.6 1h14.500v11.500h-5L7.800 15l-2.300-2.500H.6z" strokeWidth="1.300" /></Tiny></IconButton>
        <ShowDesktop aria-label="Show desktop" />
      </Tray>
    </Taskbar>
  );
}

export default function App() {
  return (
    <Screen>
      <GlobalStyle />
      <BrowserChrome />
      <Header />
      <Body>
        <SideNav />
        <FilePanel />
        <SideRail />
      </Body>
      <WindowsTaskbar />
    </Screen>
  );
}
